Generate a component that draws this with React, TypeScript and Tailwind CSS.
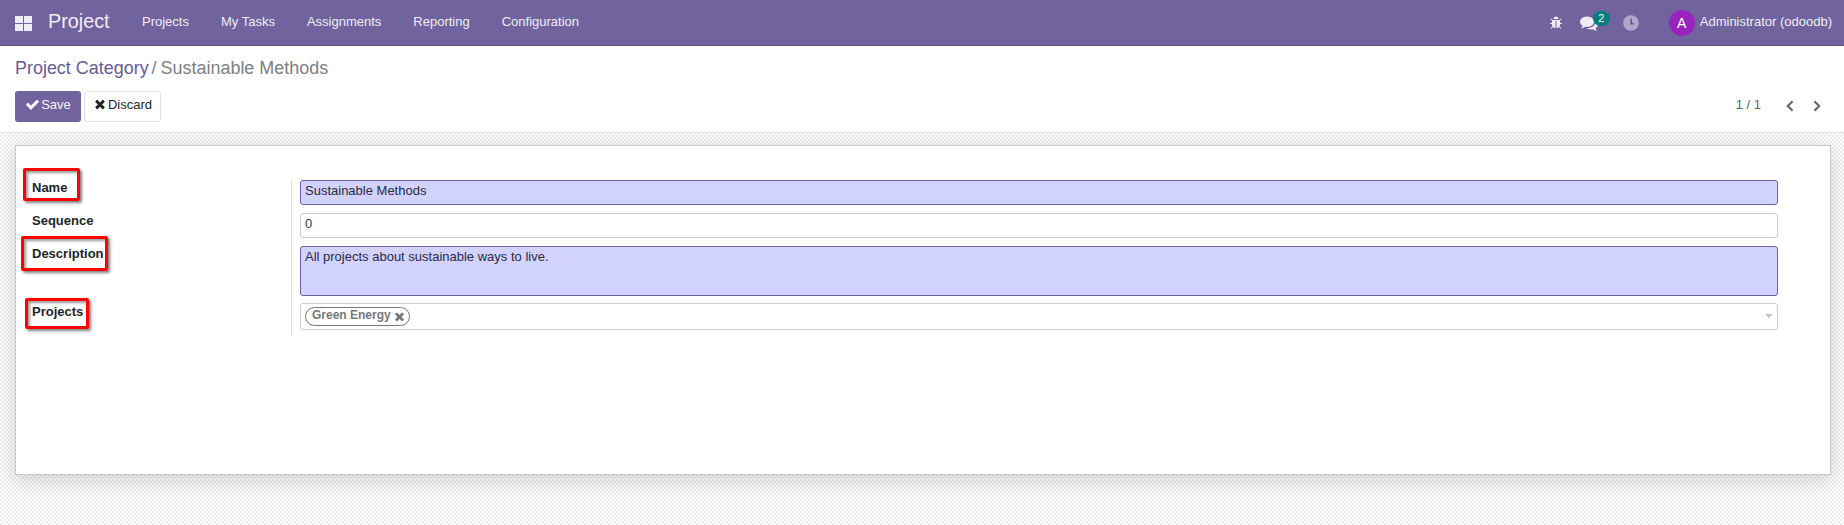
import type { ReactNode } from "react";

type IconProps = { d: string; className?: string };

function Icon({ d, className }: IconProps) {
  return (
    <svg viewBox="0 0 1792 1792" fill="currentColor" className={className} aria-hidden="true">
      <path d={d} />
    </svg>
  );
}

const TIMES =
  "M1490 1322q0 40-28 68l-136 136q-28 28-68 28t-68-28l-294-294-294 294q-28 28-68 28t-68-28l-136-136q-28-28-28-68t28-68l294-294-294-294q-28-28-28-68t28-68l136-136q28-28 68-28t68 28l294 294 294-294q28-28 68-28t68 28l136 136q28 28 28 68t-28 68l-294 294 294 294q28 28 28 68z";
const CHECK =
  "M1671 566q0 40-28 68l-724 724-136 136q-28 28-68 28t-68-28l-136-136-362-362q-28-28-28-68t28-68l136-136q28-28 68-28t68 28l294 295 656-657q28-28 68-28t68 28l136 136q28 28 28 68z";
const COMMENTS =
  "M1408 768q0 139-94 257t-256.5 186.5-353.5 68.5q-86 0-176-16-124 88-278 128-36 9-86 16h-3q-11 0-20.5-8t-11.5-21q-1-3-1-6.5t.5-6.5 2-6l2.5-5 3.5-5.5 4-5 4.5-5 4-4.5q5-6 23-25t26-29.5 22.5-29 25-38.5 20.5-44q-124-72-195-177t-71-224q0-139 94-257t256.5-186.5 353.5-68.5 353.5 68.5 256.5 186.5 94 257zm384 256q0 120-71 224.5t-195 176.5q10 24 20.5 44t25 38.5 22.5 29 26 29.5 23 25q1 1 4 4.5t4.5 5 4 5 3.5 5.5l2.5 5 2 6 .5 6.5-1 6.5q-3 14-13 22t-22 7q-50-7-86-16-154-40-278-128-90 16-176 16-271 0-472-132 58 4 88 4 161 0 309-45t264-129q125-92 192-212t67-254q0-77-23-152 129 71 204 178t75 230z";
const BUG =
  "M1696 960q0 26-19 45t-45 19h-224q0 171-67 290l208 209q19 19 19 45t-19 45q-18 19-45 19t-45-19l-198-197q-5 5-15 13t-42 28.5-65 36.5-82 29-97 13v-896h-128v896q-51 0-101.5-13.5t-87-33-66-39-43.5-32.5l-15-14-183 207q-20 21-48 21-24 0-43-16-19-18-20.5-44.5t15.5-46.5l202-227q-58-114-58-274h-224q-26 0-45-19t-19-45 19-45 45-19h224v-294l-173-173q-19-19-19-45t19-45 45-19 45 19l173 173h844l173-173q19-19 45-19t45 19 19 45-19 45l-173 173v294h224q26 0 45 19t19 45zm-480-576h-640q0-133 93.5-226.5t226.5-93.5 226.5 93.5 93.5 226.5z";

const MENU = ["Projects", "My Tasks", "Assignments", "Reporting", "Configuration"];

function Chevron({ className }: { className: string }) {
  return (
    <svg viewBox="0 0 8 12" fill="none" stroke="currentColor" strokeWidth="2.2" className={className} aria-hidden="true">
      <path d="M1.4 1.2L6.2 6L1.4 10.8" />
    </svg>
  );
}

function Navbar() {
  return (
    <header className="flex h-[46px] shrink-0 items-start border-b border-[#5f5287] bg-[#71639e] pr-3 pl-[15px] text-[#efedf4]">
      <div className="mt-4 grid grid-cols-2 gap-px">
        <span className="h-[7px] w-2 bg-[#efedf4]" />
        <span className="h-[7px] w-2 bg-[#efedf4]" />
        <span className="h-[7px] w-2 bg-[#efedf4]" />
        <span className="h-[7px] w-2 bg-[#efedf4]" />
      </div>
      <span className="ml-4 w-[94px] text-[19.8px] leading-[42px]">Project</span>
      <nav className="flex gap-8 leading-[43px]">
        {MENU.map((item) => (
          <a key={item}>{item}</a>
        ))}
      </nav>
      <div className="ml-auto flex items-start">
        <Icon d={BUG} className="mt-4 size-[14px]" />
        <div className="relative mt-[14px] ml-[17px]">
          <Icon d={COMMENTS} className="size-[18px]" />
          <span className="absolute -top-[3px] left-[13px] flex h-[15px] w-[17px] items-center justify-center rounded-full bg-[#017e7e] text-[11px] leading-none text-[#f2f8f8]">
            2
          </span>
        </div>
        <svg viewBox="0 0 16 16" className="mt-[15px] ml-[25px] size-4 opacity-50" aria-hidden="true">
          <circle cx="8" cy="8" r="7.8" fill="#efedf4" />
          <path d="M8.3 3.6V8.8H5.6" fill="none" stroke="#5b4d8b" strokeWidth="1.6" transform="matrix(-1 0 0 1 16.4 0)" />
        </svg>
        <span className="mt-[10px] ml-[30px] flex size-[26px] items-center justify-center rounded-full bg-[#9924bd] text-[14px] leading-none text-white">
          A
        </span>
        <span className="ml-[5px] leading-[43px]">Administrator (odoodb)</span>
      </div>
    </header>
  );
}

function ControlPanel() {
  return (
    <section className="h-[87px] shrink-0 border-b border-[#dee2e6] bg-white pr-[15px] pl-[15px]">
      <div className="h-[45px] pt-[11px] text-[17.95px] leading-[22px] text-[#7c7f83]">
        <a className="text-[#6a5a94]">Project Category</a>
        <span className="pr-[4px] pl-[3px]">/</span>
        <span>Sustainable Methods</span>
      </div>
      <div className="flex items-start">
        <button className="flex h-[31px] w-[66px] items-start justify-center rounded-[3px] bg-[#71639e] pt-[4px] leading-5 text-[#f5f3f8]">
          <Icon d={CHECK} className="mt-[2px] mr-px size-[15px]" />
          Save
        </button>
        <button className="ml-[3px] flex h-[31px] w-[77px] items-start justify-center rounded-[3px] border border-[#dee2e6] bg-white pt-[3px] leading-5 text-[#212529]">
          <Icon d={TIMES} className="mt-[2px] mr-px size-[14px]" />
          Discard
        </button>
        <div className="ml-auto flex items-start pr-2 text-[#666a6e]">
          <span className="mt-1 leading-5 text-[#5d6165]">1 / 1</span>
          <Chevron className="mt-[9px] ml-[25px] h-3 w-2 rotate-180" />
          <Chevron className="mt-[9px] ml-[19px] h-3 w-2" />
        </div>
      </div>
    </section>
  );
}

const FRAME =
  "absolute border-[3px] border-[#fe0000] rounded-[2px] shadow-[2px_2px_3px_rgba(0,0,0,0.5),inset_2px_2px_3px_rgba(0,0,0,0.4)]";

type RowProps = { label: string; rowClass: string; frameClass?: string; children: ReactNode };

function Row({ label, rowClass, frameClass, children }: RowProps) {
  return (
    <div className={`flex ${rowClass}`}>
      <div className="relative w-[260px] shrink-0 border-r border-[#dddddd] leading-[15px] font-bold text-[#212529]">
        <label>{label}</label>
        {frameClass && <span className={`${FRAME} ${frameClass}`} />}
      </div>
      <div className="flex-1 pl-2">{children}</div>
    </div>
  );
}

function Form() {
  return (
    <div className="pt-[34px] pr-[52px] pl-4">
      <Row label="Name" rowClass="h-[33px]" frameClass="-top-[12px] -left-[9px] h-[33px] w-[57px]">
        <div className="h-[25px] rounded-[3px] border border-[#71639e] bg-[#d2d2ff] px-1 leading-[19px] text-[#2c2c3c]">
          Sustainable Methods
        </div>
      </Row>
      <Row label="Sequence" rowClass="h-[33px]">
        <div className="h-[25px] rounded-[3px] border border-[#cccccc] bg-white px-1 leading-[19px] text-[#343a40]">0</div>
      </Row>
      <Row label="Description" rowClass="h-[57px]" frameClass="-top-[10px] -left-[11px] h-[35px] w-[87px]">
        <div className="h-[50px] rounded-[3px] border border-[#71639e] bg-[#d2d2ff] px-1 leading-[19px] text-[#2c2c3c]">
          All projects about sustainable ways to live.
        </div>
      </Row>
      <Row label="Projects" rowClass="h-[33px] [&_label]:relative [&_label]:top-px" frameClass="-top-[5px] -left-[7px] h-[31px] w-[64px]">
        <div className="flex h-[27px] items-start justify-between rounded-[3px] border border-[#cccccc] bg-white pt-[3px] pr-1 pl-1">
          <span className="flex h-[19px] items-start rounded-full border border-[#777777] pr-[3px] pl-[6px] text-[12px] leading-[15px] font-bold text-[#777777]">
            Green Energy
            <Icon d={TIMES} className="mt-[2px] ml-[2px] size-[13px]" />
          </span>
          <span className="mt-[7px] h-0 w-0 border-x-4 border-t-4 border-x-transparent border-t-[#c4c4c4]" />
        </div>
      </Row>
    </div>
  );
}

export default function App() {
  return (
    <div className="flex h-[525px] w-full flex-col overflow-hidden bg-white font-['Liberation_Sans',Arial,sans-serif] text-[13px]">
      <Navbar />
      <ControlPanel />
      <main className="flex-1 bg-[repeating-conic-gradient(#ececec_0_25%,#ffffff_0_50%)] bg-[length:4px_4px] pt-3 pr-[13px] pl-[15px]">
        <div className="h-[330px] border border-[#c8c8d3] bg-white shadow-[0_5px_20px_rgba(0,0,0,0.16)]">
          <Form />
        </div>
      </main>
    </div>
  );
}
